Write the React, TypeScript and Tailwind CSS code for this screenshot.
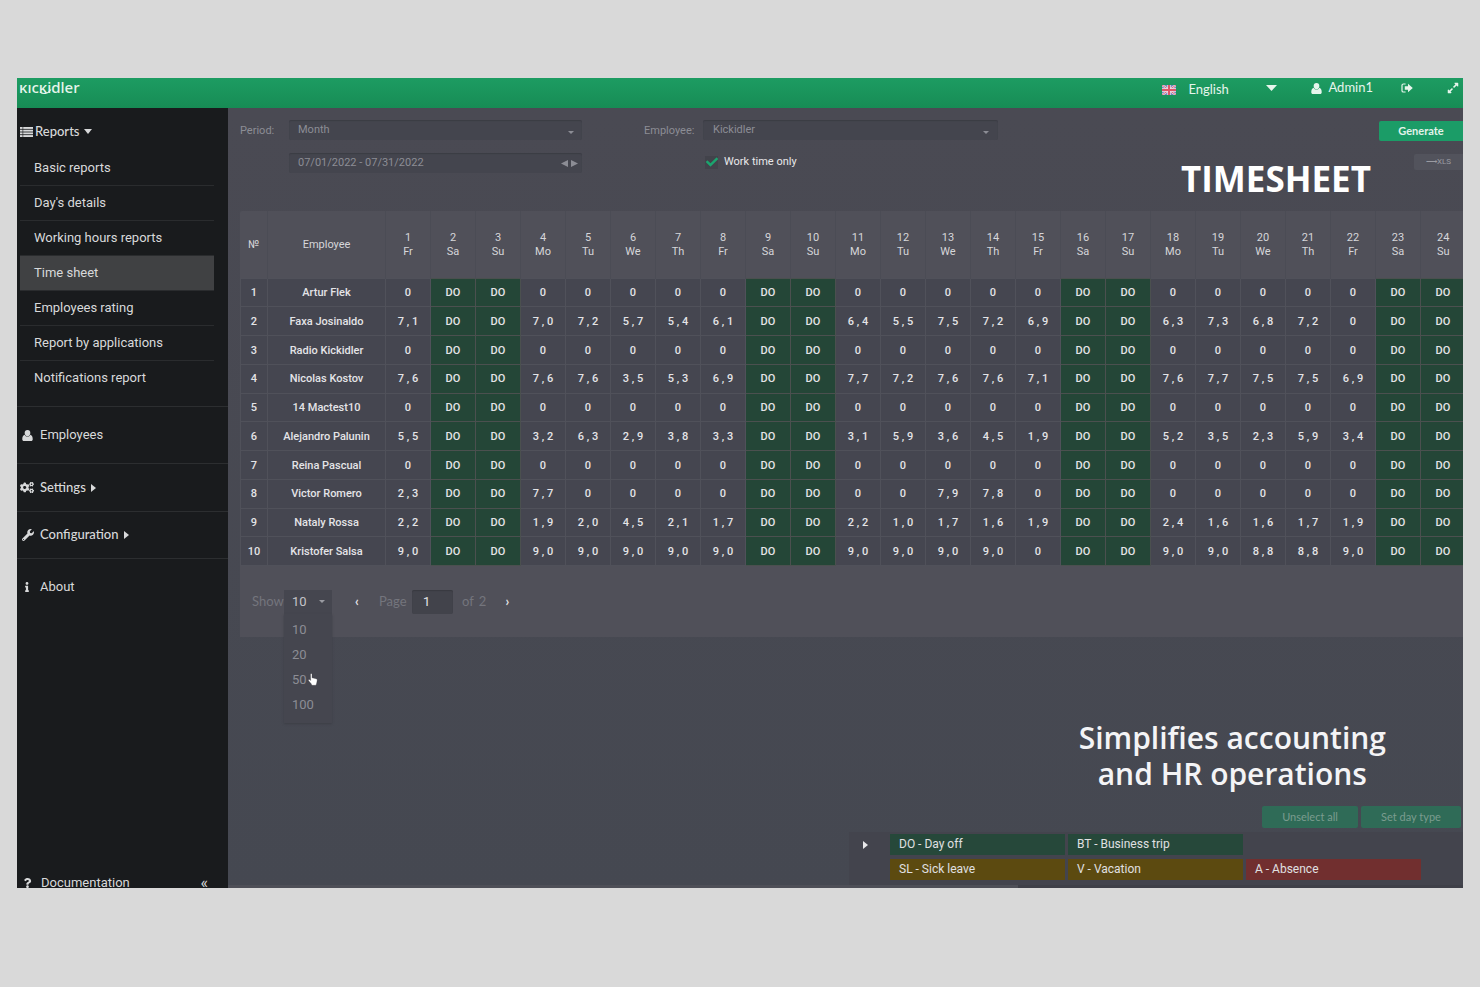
import { useState } from "react";
import { FaCheck, FaCogs, FaExpandAlt, FaInfo, FaQuestion, FaWrench } from "react-icons/fa";

type Employee = {
  name: string;
  hours: string;
};

// D = day off, every other token is the number of hours worked
const employees: Employee[] = [
  { name: "Artur Flek", hours: "0 D D 0 0 0 0 0 D D 0 0 0 0 0 D D 0 0 0 0 0 D D" },
  { name: "Faxa Josinaldo", hours: "7,1 D D 7,0 7,2 5,7 5,4 6,1 D D 6,4 5,5 7,5 7,2 6,9 D D 6,3 7,3 6,8 7,2 0 D D" },
  { name: "Radio Kickidler", hours: "0 D D 0 0 0 0 0 D D 0 0 0 0 0 D D 0 0 0 0 0 D D" },
  { name: "Nicolas Kostov", hours: "7,6 D D 7,6 7,6 3,5 5,3 6,9 D D 7,7 7,2 7,6 7,6 7,1 D D 7,6 7,7 7,5 7,5 6,9 D D" },
  { name: "14 Mactest10", hours: "0 D D 0 0 0 0 0 D D 0 0 0 0 0 D D 0 0 0 0 0 D D" },
  { name: "Alejandro Palunin", hours: "5,5 D D 3,2 6,3 2,9 3,8 3,3 D D 3,1 5,9 3,6 4,5 1,9 D D 5,2 3,5 2,3 5,9 3,4 D D" },
  { name: "Reina Pascual", hours: "0 D D 0 0 0 0 0 D D 0 0 0 0 0 D D 0 0 0 0 0 D D" },
  { name: "Victor Romero", hours: "2,3 D D 7,7 0 0 0 0 D D 0 0 7,9 7,8 0 D D 0 0 0 0 0 D D" },
  { name: "Nataly Rossa", hours: "2,2 D D 1,9 2,0 4,5 2,1 1,7 D D 2,2 1,0 1,7 1,6 1,9 D D 2,4 1,6 1,6 1,7 1,9 D D" },
  { name: "Kristofer Salsa", hours: "9,0 D D 9,0 9,0 9,0 9,0 9,0 D D 9,0 9,0 9,0 9,0 0 D D 9,0 9,0 8,8 8,8 9,0 D D" },
];

const weekdays = ["Fr", "Sa", "Su", "Mo", "Tu", "We", "Th"];
const days = Array.from({ length: 24 }, (_, i) => ({ day: i + 1, name: weekdays[i % 7] }));

const reportLinks = [
  "Basic reports",
  "Day's details",
  "Working hours reports",
  "Time sheet",
  "Employees rating",
  "Report by applications",
  "Notifications report",
];

const dayTypes = [
  { label: "DO - Day off", color: "bg-[#26483a]" },
  { label: "BT - Business trip", color: "bg-[#26483a]" },
  { label: "", color: "" },
  { label: "SL - Sick leave", color: "bg-[#5c4a10]" },
  { label: "V - Vacation", color: "bg-[#5c4a10]" },
  { label: "A - Absence", color: "bg-[#712f2f]" },
];

function UserIcon({ className }: { className?: string }) {
  return (
    <svg viewBox="0 0 12 12" className={className} fill="currentColor" aria-hidden="true">
      <ellipse cx="6" cy="3.4" rx="3.1" ry="3.4" />
      <path d="M2.800 5.200C.8 5.800.3 8 .3 10c0 1.300.7 2 1.900 2h7.600c1.200 0 1.900-.7 1.900-2 0-2-.5-4.200-2.500-4.800C8.400 6.600 7.300 7.200 6 7.200s-2.400-.6-3.200-2z" />
    </svg>
  );
}

function ListIcon() {
  return (
    <svg viewBox="0 0 13 10" className="h-[10px] w-[13px]" fill="currentColor" aria-hidden="true">
      {[0, 2.7, 5.4, 8.1].map((y) => (
        <g key={y}>
          <rect x="0" y={y} width="2.6" height="1.9" />
          <rect x="3.2" y={y} width="9.8" height="1.9" />
        </g>
      ))}
    </svg>
  );
}

function SignOutIcon() {
  return (
    <svg viewBox="0 0 12 10" className="h-[10px] w-3" aria-hidden="true">
      <path d="M4.600 1H2.400C1.500 1 1 1.500 1 2.300v5.400C1 8.500 1.500 9 2.400 9h2.200" fill="none" stroke="currentColor" strokeWidth="1.200" />
      <path d="M7 .8v2.500H3.800v3.400H7v2.500L11.800 5z" fill="currentColor" />
    </svg>
  );
}

function CaretDown({ className }: { className?: string }) {
  return (
    <svg viewBox="0 0 10 6" className={className} fill="currentColor" preserveAspectRatio="none" aria-hidden="true">
      <path d="M0 0h10L5 6z" />
    </svg>
  );
}

function CaretRight({ className }: { className?: string }) {
  return (
    <svg viewBox="0 0 5 8" className={className} fill="currentColor" preserveAspectRatio="none" aria-hidden="true">
      <path d="M0 0v8l5-4z" />
    </svg>
  );
}

function FlagIcon() {
  return (
    <svg viewBox="0 0 14 10" className="h-[10px] w-[14px]" aria-hidden="true">
      <rect width="14" height="10" fill="#7484bd" />
      <path d="M0 0l14 10M14 0L0 10" stroke="#ecdde6" strokeWidth="2.200" />
      <path d="M0 0l14 10M14 0L0 10" stroke="#dc6f80" strokeWidth="1" />
      <path d="M7 0v10M0 5h14" stroke="#f0dfe5" strokeWidth="3.400" />
      <path d="M7 0v10M0 5h14" stroke="#dd5568" strokeWidth="2" />
    </svg>
  );
}

function HandCursor() {
  return (
    <svg viewBox="0 0 10 13" className="absolute top-[59px] left-6 h-[13px] w-[10px]" aria-hidden="true">
      <path
        d="M2.500 1.200c0-.9 1.500-.9 1.500 0v3.600l4 .9c.9.200 1.300.7 1.200 1.600L8.700 10 8 12.300H3.900L3 10.500.6 7.700c-.6-.9.4-1.700 1.200-1l.9.800z"
        fill="#fff"
        stroke="#33343a"
        strokeWidth=".3"
      />
    </svg>
  );
}

function Header() {
  return (
    <header className="flex h-[30px] items-start justify-between bg-linear-to-b from-[#1d9c62] to-[#178c55] font-['Lato',sans-serif] text-[13px] text-[#e6f5ec]">
      <a href="#" className="relative ml-[2px] font-['Noto_Sans',sans-serif] text-[15px] leading-[18px] font-medium">
        ĸıcĸidler
        <svg viewBox="0 0 14 6" className="absolute top-[11px] left-[20px] h-[6px] w-[14px]" fill="none" aria-hidden="true">
          <path d="M1 3C4 5.500 9 5 12 .5" stroke="currentColor" strokeWidth="1.200" />
        </svg>
      </a>
      <div className="flex h-5 items-center">
        <button className="flex items-center pt-1">
          <FlagIcon />
          <span className="ml-3 w-[78px] text-left">English</span>
          <CaretDown className="mb-1 h-[6px] w-[11px]" />
        </button>
        <a href="#" className="ml-[34px] flex items-center gap-[6px]">
          <UserIcon className="h-[11px] w-[11px]" />
          Admin1
        </a>
        <button aria-label="Sign out" className="ml-7">
          <SignOutIcon />
        </button>
        <button aria-label="Full screen" className="mr-1 ml-[34px]">
          <FaExpandAlt className="h-3 w-3" />
        </button>
      </div>
    </header>
  );
}

function Sidebar() {
  return (
    <nav className="flex w-[211px] shrink-0 flex-col bg-[#191b1d] text-[13px] text-[#d8d9da]">
      <button className="flex h-[43px] items-center pt-1 pl-[3px] font-['Lato',sans-serif] font-medium">
        <ListIcon />
        <span className="ml-[2px]">Reports</span>
        <CaretDown className="ml-[5px] h-[5px] w-2" />
      </button>
      <ul className="mr-[14px] mb-[11px] ml-[3px]">
        {reportLinks.map((label) => (
          <li key={label} className="border-b border-[#2a2c2e] last:border-b-0">
            <a
              href="#"
              className={
                label === "Time sheet"
                  ? "flex h-[34px] items-center bg-[#404143] pl-[14px]"
                  : "flex h-[34px] items-center pl-[14px]"
              }
            >
              {label}
            </a>
          </li>
        ))}
      </ul>
      <a href="#" className="flex h-[57px] items-center border-t border-[#2c2e30] pl-[5px]">
        <UserIcon className="h-[11px] w-[11px]" />
        <span className="ml-[7px]">Employees</span>
      </a>
      <button className="flex h-12 items-center border-t border-[#2c2e30] pl-[3px] font-['Lato',sans-serif] font-medium">
        <FaCogs className="h-[13px] w-[14px]" />
        <span className="ml-[6px]">Settings</span>
        <CaretRight className="ml-[5px] h-2 w-[5px]" />
      </button>
      <button className="flex h-[47px] items-center border-t border-[#2c2e30] pl-[5px] font-['Lato',sans-serif] font-medium">
        <FaWrench className="h-3 w-3" />
        <span className="ml-[6px]">Configuration</span>
        <CaretRight className="ml-[5px] h-2 w-[5px]" />
      </button>
      <a href="#" className="flex h-14 items-center border-t border-[#2c2e30] pl-[5px]">
        <FaInfo className="h-[10px] w-[10px]" />
        <span className="ml-2">About</span>
      </a>
      <div className="mt-auto flex h-[10px] items-center">
        <a href="#" className="flex items-center pl-[5px]">
          <FaQuestion className="h-[10px] w-[11px]" />
          <span className="ml-2">Documentation</span>
        </a>
        <button aria-label="Collapse menu" className="mr-5 ml-auto text-base leading-4">
          «
        </button>
      </div>
    </nav>
  );
}

function Filters() {
  const [workTimeOnly, setWorkTimeOnly] = useState(true);

  return (
    <section className="flex items-start pt-3 pl-3 text-[11px] text-[#8c8d95]">
      <label htmlFor="period" className="w-[49px] leading-[21px]">
        Period:
      </label>
      <div className="flex w-[293px] flex-col gap-[13px]">
        <div className="relative">
          <select id="period" className="h-5 w-full appearance-none rounded-xs bg-[#44454e] pt-px pl-[9px] shadow-[inset_0_1px_1px_#3b3c44]">
            <option>Month</option>
          </select>
          <CaretDown className="absolute top-[11px] right-2 h-[3px] w-[6px]" />
        </div>
        <div className="flex h-5 items-center rounded-xs bg-[#44454e] pr-1 shadow-[inset_0_1px_1px_#3b3c44]">
          <input aria-label="Date range" defaultValue="07/01/2022 - 07/31/2022" className="min-w-0 flex-1 bg-transparent pt-px pl-[9px]" />
          <button aria-label="Previous period">
            <CaretRight className="h-[7px] w-[7px] rotate-180" />
          </button>
          <button aria-label="Next period" className="ml-[3px]">
            <CaretRight className="h-[7px] w-[7px]" />
          </button>
        </div>
      </div>
      <label htmlFor="employee" className="ml-[62px] w-[59px] leading-[21px]">
        Employee:
      </label>
      <div className="w-[295px]">
        <div className="relative">
          <select id="employee" className="h-5 w-full appearance-none rounded-xs bg-[#44454e] pt-px pl-[10px] shadow-[inset_0_1px_1px_#3b3c44]">
            <option>Kickidler</option>
          </select>
          <CaretDown className="absolute top-[11px] right-[9px] h-[3px] w-[6px]" />
        </div>
        <label className="mt-3 ml-[2px] flex h-5 items-center text-[#e8e8ea]">
          <span className="relative mr-[6px] flex h-[13px] w-[13px] items-center justify-center bg-[#42434b]">
            <input
              type="checkbox"
              checked={workTimeOnly}
              onChange={(e) => setWorkTimeOnly(e.target.checked)}
              className="absolute inset-0 appearance-none"
            />
            {workTimeOnly && <FaCheck className="h-3 w-3 text-[#1ba56f]" />}
          </span>
          Work time only
        </label>
      </div>
      <div className="ml-auto flex flex-col items-end">
        <button className="mt-px h-5 w-[84px] rounded-l-xs bg-[#1b9c67] font-['Lato',sans-serif] font-bold text-[#e2f3ea]">
          Generate
        </button>
        <button className="mt-[13px] h-4 w-[49px] rounded-l-xs bg-[#52535c] text-[8px] text-[#9a9ba2]">⟶XLS</button>
      </div>
    </section>
  );
}

function TimesheetTable() {
  return (
    <table className="h-[355px] w-full table-fixed border-collapse text-center text-[11px] font-medium text-[#e4e4e7]">
      <colgroup>
        <col className="w-[27px]" />
        <col className="w-[118px]" />
      </colgroup>
      <thead>
        <tr className="h-[67px] text-[#d6d6da]">
          <th className="pt-[2px] font-normal">№</th>
          <th className="border-l border-[#4b4c55] pt-[2px] font-normal">Employee</th>
          {days.map(({ day, name }) => (
            <th key={day} className="border-l border-[#4b4c55] pt-[2px] leading-[14px] font-normal">
              {day}
              <br />
              {name}
            </th>
          ))}
        </tr>
      </thead>
      <tbody>
        {employees.map((employee, i) => (
          <tr key={employee.name}>
            <td className="border border-[#50515a] bg-[#454650] pt-[2px]">{i + 1}</td>
            <td className="border border-[#50515a] bg-[#454650] pt-[2px]">{employee.name}</td>
            {employee.hours.split(" ").map((value, j) =>
              value === "D" ? (
                <td key={j} className="border border-[#4b504f] bg-[#244637] pt-[2px]">
                  DO
                </td>
              ) : (
                <td key={j} className="border border-[#50515a] bg-[#454650] pt-[2px]">
                  {value.replace(",", " , ")}
                </td>
              )
            )}
          </tr>
        ))}
      </tbody>
    </table>
  );
}

function Pagination() {
  const [pageSize, setPageSize] = useState(10);

  return (
    <div className="flex h-[71px] items-center pl-3 font-['Lato',sans-serif] text-[13px] text-[#74757d]">
      <span className="w-8">Show</span>
      <div className="relative font-['Roboto',sans-serif]">
        <button
          aria-haspopup="listbox"
          aria-expanded="true"
          className="flex h-6 w-12 items-center justify-between bg-[#45464f] pr-[7px] pl-2 text-[#c4c4c9]"
        >
          {pageSize}
          <CaretDown className="h-[3px] w-[6px] text-[#9a9ba2]" />
        </button>
        <ul
          role="listbox"
          aria-label="Rows per page"
          className="absolute top-6 left-0 w-12 bg-[#45464f] pt-1 pb-[5px] text-[#8c8d95] shadow-[0_1px_2px_#3d3e46]"
        >
          {[10, 20, 50, 100].map((size) => (
            <li key={size} role="option" aria-selected={size === pageSize}>
              <button onClick={() => setPageSize(size)} className="h-[25px] w-full pl-2 text-left">
                {size}
              </button>
            </li>
          ))}
          <HandCursor />
        </ul>
      </div>
      <button aria-label="Previous page" className="ml-[22px] w-[6px] font-bold text-[#e4e4e7]">
        ‹
      </button>
      <label htmlFor="page" className="ml-[19px] w-[33px]">
        Page
      </label>
      <input
        id="page"
        defaultValue="1"
        className="h-6 w-[41px] rounded-xs bg-[#42434b] pl-[11px] font-['Roboto',sans-serif] text-[#e4e4e7] shadow-[inset_0_1px_1px_#393a41]"
      />
      <span className="ml-[9px] flex gap-[5px]">
        <span>of</span>
        <span>2</span>
      </span>
      <button aria-label="Next page" className="ml-[18px] w-[6px] font-bold text-[#e4e4e7]">
        ›
      </button>
    </div>
  );
}

function DayTypeBar() {
  return (
    <section className="mt-auto">
      <div className="flex justify-end gap-[3px] pr-[2px] font-['Lato',sans-serif] text-[11px] text-[#7b9c8f]">
        <button className="h-[22px] w-24 rounded-xs bg-[#2f6b57]">Unselect all</button>
        <button className="h-[22px] w-[100px] rounded-xs bg-[#2f6b57]">Set day type</button>
      </div>
      <div className="mt-1 ml-auto flex h-[53px] w-[614px] items-start bg-[#43444d] pt-[2px]">
        <button aria-label="Expand day types" className="flex h-[22px] w-[41px] items-center pl-[14px] text-[#e8e8ea]">
          <CaretRight className="h-2 w-[5px]" />
        </button>
        <ul className="grid grid-cols-[repeat(3,175px)] gap-x-[3px] gap-y-1 text-[12px] text-[#e0e0e2]">
          {dayTypes.map(({ label, color }) => (
            <li key={label} className={color}>
              {label && <button className="h-[21px] w-full pb-px pl-[9px] text-left">{label}</button>}
            </li>
          ))}
        </ul>
      </div>
      <div className="flex h-[3px] bg-[#3f4048]">
        <div className="w-[64%] bg-[#4e4f57]" />
      </div>
    </section>
  );
}

export default function App() {
  return (
    <div className="flex min-h-screen flex-col bg-[#d9d9d9] px-[17px] pt-[78px] pb-[99px] font-['Roboto',sans-serif]">
      <Header />
      <div className="flex flex-1">
        <Sidebar />
        <main className="relative flex min-w-0 flex-1 flex-col overflow-hidden bg-linear-to-b from-[#4a4a53] to-[#454851]">
          <Filters />
          <div className="-mr-[3px] mt-[38px] ml-3 rounded-tl-xs bg-[#505059]">
            <TimesheetTable />
            <Pagination />
          </div>
          <DayTypeBar />

          <h1 className="absolute top-[47px] right-[92px] font-['Open_Sans',sans-serif] text-[35px] leading-[48px] font-bold text-white">
            TIMESHEET
          </h1>
          <p className="absolute right-[77px] bottom-24 text-center font-['Open_Sans',sans-serif] text-[30px] leading-9 font-semibold text-[#f4f4f6]">
            Simplifies accounting
            <br />
            and HR operations
          </p>
        </main>
      </div>
    </div>
  );
}
